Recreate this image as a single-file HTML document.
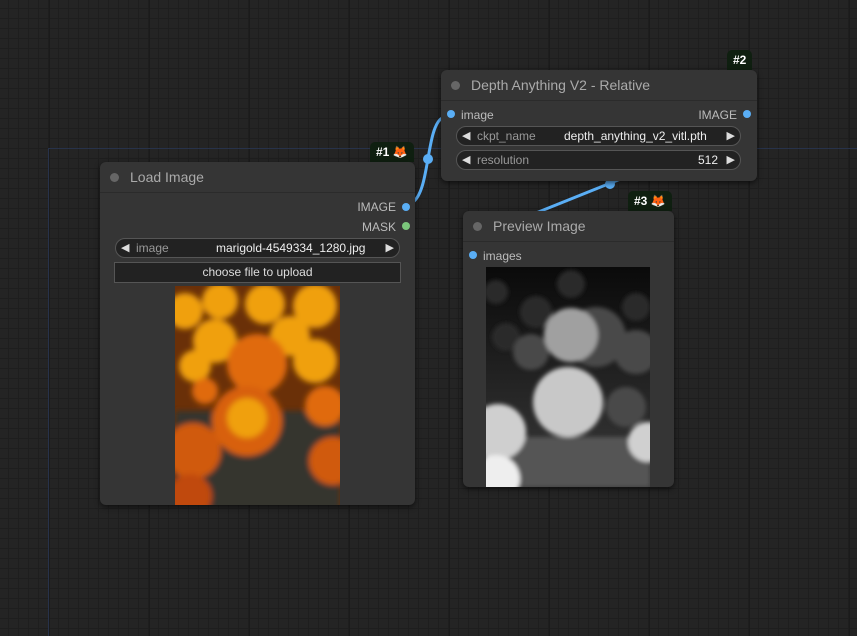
<!DOCTYPE html>
<html><head><style>
*{margin:0;padding:0;box-sizing:border-box}
body{width:857px;height:636px;overflow:hidden;background:#242424;font-family:"Liberation Sans",sans-serif;position:relative;
background-image:linear-gradient(to right,#1b1b1b 1px,transparent 1px),linear-gradient(to right,#1e1e1e 1px,transparent 1px),linear-gradient(to bottom,#1e1e1e 1px,transparent 1px);
background-size:100px 100px,10px 10px,10px 10px;background-position:49px 0,8px 8px,8px 8px}
.node{position:absolute;background:#353535;border-radius:6px;box-shadow:0 2px 6px rgba(0,0,0,.6)}
.title{height:31px;border-bottom:1px solid #2b2b2b;color:#aaa;font-size:14px;line-height:30px;padding-left:30px;position:relative}
.title:before{content:"";position:absolute;left:10px;top:11px;width:9px;height:9px;border-radius:50%;background:#666}
.badge{position:absolute;background:#0f1f10;color:#fff;font-weight:bold;font-size:12px;border-radius:5px 5px 0 0;height:20px;line-height:20px;padding:0 6px}
.lab{position:absolute;color:#bbb;font-size:12px}
.dot{position:absolute;width:8px;height:8px;border-radius:50%}
.w{position:absolute;height:20px;border:1px solid #555;border-radius:10px;background:#222;font-size:12px;line-height:18px;color:#999}
.w .l{position:absolute;left:20px}
.w .v{position:absolute;color:#eee}
.w:before{content:"◀";position:absolute;left:5px;color:#ddd;font-size:11px}
.w:after{content:"▶";position:absolute;right:5px;color:#ddd;font-size:11px}
</style></head><body>
<div style="position:absolute;left:48px;top:148px;width:809px;height:488px;border-left:1px solid #27324a;border-top:1px solid #27324a"></div>
<svg style="position:absolute;left:0;top:0" width="857" height="636">
<path d="M413 202 C430 190,426 128,442 118" stroke="#5aaef5" stroke-width="3" fill="none"/>
<circle cx="428" cy="159" r="5" fill="#5aaef5"/>
<path d="M628 176 L536 213" stroke="#5aaef5" stroke-width="3" fill="none"/>
<circle cx="610" cy="184" r="5" fill="#5aaef5"/>
</svg>

<div class="badge" style="left:370px;top:142px">#1 <span style="color:#e8601c">🦊</span></div>
<div class="node" style="left:100px;top:162px;width:315px;height:343px">
<div class="title">Load Image</div>
<div class="lab" style="right:19px;top:38px">IMAGE</div><div class="dot" style="right:5px;top:41px;background:#5aaef5"></div>
<div class="lab" style="right:19px;top:58px">MASK</div><div class="dot" style="right:5px;top:60px;background:#7bc67b"></div>
<div class="w" style="left:15px;top:76px;width:285px"><span class="l">image</span><span class="v" style="left:100px">marigold-4549334_1280.jpg</span></div>
<div style="position:absolute;left:14px;top:100px;width:287px;height:21px;background:#222;border:1px solid #555;color:#ddd;font-size:12px;line-height:19px;text-align:center">choose file to upload</div>
<svg style="position:absolute;left:75px;top:124px" width="165" height="219">
<defs><filter id="b1"><feGaussianBlur stdDeviation="3"/></filter><clipPath id="c1"><rect width="165" height="219"/></clipPath></defs>
<g clip-path="url(#c1)"><rect width="165" height="219" fill="#6a3008"/>
<g filter="url(#b1)">
<rect y="125" width="165" height="100" fill="#34342e"/>
<g fill="#f0a010"><circle cx="10" cy="25" r="18"/><circle cx="45" cy="15" r="18"/><circle cx="90" cy="18" r="20"/><circle cx="140" cy="20" r="22"/><circle cx="40" cy="55" r="22"/><circle cx="140" cy="75" r="22"/><circle cx="20" cy="80" r="16"/><circle cx="115" cy="50" r="20"/></g>
<g fill="#e06a0a"><circle cx="82" cy="78" r="30"/><circle cx="30" cy="105" r="13"/><circle cx="150" cy="120" r="20"/></g>
<circle cx="72" cy="135" r="35" fill="#d8600a"/><circle cx="72" cy="132" r="20" fill="#f0a010"/>
<circle cx="18" cy="165" r="28" fill="#d05a08"/><circle cx="158" cy="175" r="24" fill="#d05a08"/>
<circle cx="15" cy="210" r="22" fill="#c04a08"/>
</g></g>
</svg>
</div>

<div class="badge" style="left:727px;top:50px">#2</div>
<div class="node" style="left:441px;top:70px;width:316px;height:111px">
<div class="title">Depth Anything V2 - Relative</div>
<div class="dot" style="left:6px;top:40px;background:#5aaef5"></div><div class="lab" style="left:20px;top:38px">image</div>
<div class="lab" style="right:20px;top:38px">IMAGE</div><div class="dot" style="right:6px;top:40px;background:#5aaef5"></div>
<div class="w" style="left:15px;top:56px;width:285px"><span class="l">ckpt_name</span><span class="v" style="left:107px">depth_anything_v2_vitl.pth</span></div>
<div class="w" style="left:15px;top:80px;width:285px"><span class="l">resolution</span><span class="v" style="right:22px">512</span></div>
</div>

<div class="badge" style="left:628px;top:191px">#3 <span style="color:#e8601c">🦊</span></div>
<div class="node" style="left:463px;top:211px;width:211px;height:276px">
<div class="title">Preview Image</div>
<div class="dot" style="left:6px;top:40px;background:#5aaef5"></div><div class="lab" style="left:20px;top:38px">images</div>
<svg style="position:absolute;left:23px;top:56px" width="164" height="220">
<defs><linearGradient id="g" x1="0" y1="0" x2="0" y2="1"><stop offset="0" stop-color="#0a0a0a"/><stop offset="1" stop-color="#3a3a3a"/></linearGradient><filter id="b2"><feGaussianBlur stdDeviation="2"/></filter><clipPath id="c2"><rect width="164" height="220"/></clipPath></defs>
<g clip-path="url(#c2)"><rect width="164" height="220" fill="url(#g)"/>
<g filter="url(#b2)">
<g fill="#2a2a2a"><circle cx="85" cy="17" r="14"/><circle cx="10" cy="25" r="12"/><circle cx="50" cy="45" r="16"/><circle cx="150" cy="40" r="14"/><circle cx="20" cy="70" r="14"/></g>
<g fill="#4a4a4a"><circle cx="110" cy="70" r="30"/><circle cx="150" cy="85" r="22"/><circle cx="45" cy="85" r="18"/><circle cx="140" cy="140" r="20"/></g>
<rect y="170" width="164" height="50" fill="#555"/>
<circle cx="85" cy="68" r="27" fill="#a0a0a0"/>
<circle cx="82" cy="135" r="35" fill="#c8c8c8"/>
<circle cx="12" cy="165" r="28" fill="#cfcfcf"/>
<circle cx="162" cy="175" r="20" fill="#d0d0d0"/>
<circle cx="10" cy="212" r="24" fill="#eee"/>
</g></g>
</svg>
</div>
</body></html>
